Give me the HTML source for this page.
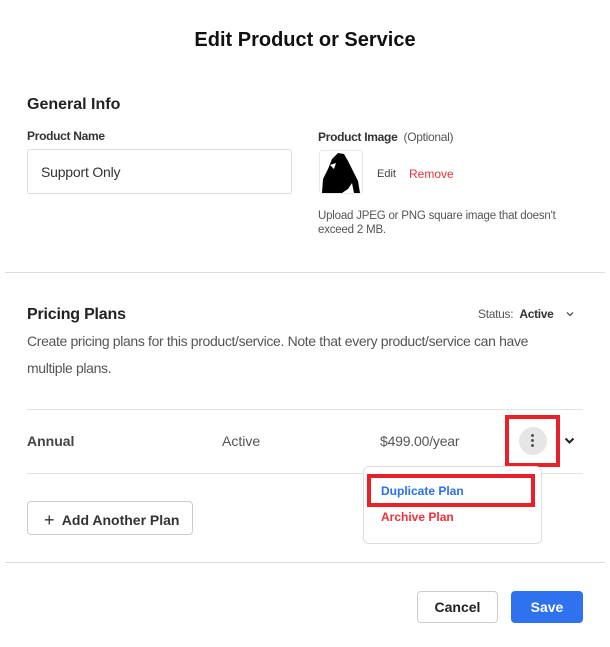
<!DOCTYPE html>
<html><head><style>
*{margin:0;padding:0;box-sizing:border-box}
body{width:610px;height:647px;background:#fff;font-family:"Liberation Sans",sans-serif;color:#222;position:relative;overflow:hidden}
.a{position:absolute;white-space:nowrap}
.hr{position:absolute;height:1px;background:#ddd}
</style></head><body>
<div class="a" style="left:0;width:610px;text-align:center;top:29px;font-size:20px;font-weight:bold;color:#111">Edit Product or Service</div>
<div class="a" style="left:27px;top:96px;font-size:16px;font-weight:bold;color:#222">General Info</div>
<div class="a" style="left:27px;top:129px;font-size:12px;font-weight:bold;color:#333;letter-spacing:-0.3px">Product Name</div>
<div class="a" style="left:27px;top:149px;width:265px;height:45px;border:1px solid #ddd;border-radius:3px"></div>
<div class="a" style="left:41px;top:164px;font-size:14px;color:#333;letter-spacing:-0.2px">Support Only</div>
<div class="a" style="left:318px;top:130px;font-size:12px;color:#555;letter-spacing:-0.3px"><b style="color:#333">Product Image</b>&nbsp; (Optional)</div>
<div class="a" style="left:319px;top:150px;width:44px;height:44px;border:1px solid #e4e8ee;border-radius:3px;overflow:hidden">
<svg width="44" height="44" viewBox="0 0 44 44"><path d="M2 42 L3 28 L8 18 L12 8 L18 2 L24 3 L28 10 L33 20 L38 30 L40 42 L34 42 L32 32 L28 38 L22 42 Z" fill="#000"/><path d="M10 14 L16 12 L14 18 Z" fill="#fff"/></svg></div>
<div class="a" style="left:377px;top:168px;font-size:11px;color:#444">Edit</div>
<div class="a" style="left:409px;top:167px;font-size:12px;color:#f0303a">Remove</div>
<div class="a" style="left:318px;top:209px;font-size:11.5px;color:#555;line-height:14px;letter-spacing:-0.2px">Upload JPEG or PNG square image that doesn't<br>exceed 2 MB.</div>
<div class="hr" style="left:5px;width:600px;top:272px"></div>
<div class="a" style="left:27px;top:306px;font-size:16px;font-weight:bold;color:#222;letter-spacing:-0.2px">Pricing Plans</div>
<div class="a" style="left:478px;top:307px;font-size:12px;color:#555;letter-spacing:-0.3px">Status:&nbsp; <b style="color:#333">Active</b></div>
<svg class="a" style="left:566px;top:311px" width="8" height="6" viewBox="0 0 8 6"><path d="M1 1.5 L4 4.5 L7 1.5" stroke="#555" stroke-width="1.3" fill="none"/></svg>
<div class="a" style="left:27px;top:328px;font-size:14px;color:#555;line-height:27px;letter-spacing:-0.35px">Create pricing plans for this product/service. Note that every product/service can have<br>multiple plans.</div>
<div class="hr" style="left:27px;width:556px;top:409px;background:#e4e4e4"></div>
<div class="a" style="left:27px;top:433px;font-size:14px;font-weight:bold;color:#444">Annual</div>
<div class="a" style="left:222px;top:433px;font-size:14px;color:#555">Active</div>
<div class="a" style="left:380px;top:433px;font-size:14px;color:#555;letter-spacing:-0.2px">$499.00/year</div>
<div class="a" style="left:519px;top:427px;width:28px;height:28px;border-radius:50%;background:#e6e6e6"></div>
<div class="a" style="left:531px;top:434px;width:3px;height:3px;border-radius:50%;background:#555;box-shadow:0 5px 0 #555,0 10px 0 #555"></div>
<div class="a" style="left:505px;top:415px;width:55px;height:52px;border:4px solid #e8202a"></div>
<svg class="a" style="left:564px;top:437px" width="11" height="8" viewBox="0 0 11 8"><path d="M1.5 1.5 L5.5 5.5 L9.5 1.5" stroke="#222" stroke-width="2" fill="none"/></svg>
<div class="hr" style="left:27px;width:556px;top:473px;background:#e4e4e4"></div>
<div class="a" style="left:27px;top:501px;width:166px;height:34px;border:1px solid #ccc;border-radius:4px"></div>
<div class="a" style="left:44px;top:509px;font-size:14px;font-weight:bold;color:#333"><span style="font-size:18px;font-weight:normal;position:relative;top:1px">+</span>&nbsp; Add Another Plan</div>
<div class="a" style="left:363px;top:466px;width:179px;height:78px;border:1px solid #ddd;border-radius:6px;background:#fff"></div>
<div class="a" style="left:367px;top:474px;width:168px;height:33px;border:4px solid #e8202a"></div>
<div class="a" style="left:381px;top:484px;font-size:12px;font-weight:bold;color:#2a6ef0">Duplicate Plan</div>
<div class="a" style="left:381px;top:510px;font-size:12px;font-weight:bold;color:#f0303a">Archive Plan</div>
<div class="hr" style="left:5px;width:600px;top:562px"></div>
<div class="a" style="left:417px;top:591px;width:81px;height:32px;border:1px solid #ccc;border-radius:4px;text-align:center;line-height:30px;font-size:14px;font-weight:bold;color:#222">Cancel</div>
<div class="a" style="left:511px;top:591px;width:72px;height:32px;border-radius:4px;background:#2f72f0;text-align:center;line-height:32px;font-size:14px;font-weight:bold;color:#fff">Save</div>
</body></html>
